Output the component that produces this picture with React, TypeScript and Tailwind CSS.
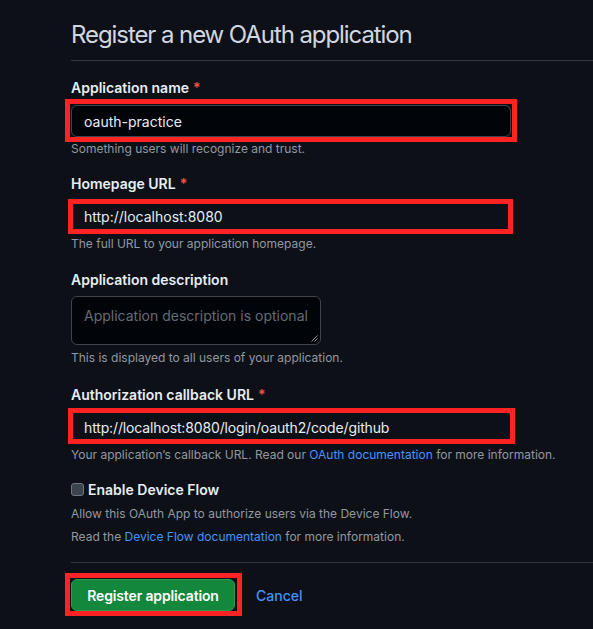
import React from 'react';

const RedMark: React.FC<{ className: string }> = ({ className }) => (
  <div className={`pointer-events-none absolute border-[5px] border-[#ff2323] ${className}`} />
);

const Label: React.FC<{ text: string; required?: boolean; className?: string }> = ({ text, required, className = '' }) => (
  <div className={`text-[14px] leading-[20px] font-semibold text-[#e6edf3] ${className}`}>
    {text}
    {required && <span className="ml-1 text-[#f85149]">*</span>}
  </div>
);

const Note: React.FC<{ children: React.ReactNode; className?: string }> = ({ children, className = '' }) => (
  <p className={`text-[12px] leading-[18px] text-[#9198a1] ${className}`}>{children}</p>
);

export default function App() {
  return (
    <div className="min-h-[629px] w-[593px] overflow-hidden bg-[#0d1117] pl-[71px] font-['Inter','Liberation_Sans',sans-serif]">
      <div className="border-b border-[#30363d] pt-[17px] pb-[7px]">
        <h1 className="text-[24px] leading-[36px] font-normal tracking-[-0.045em] text-[#d1d7e0]">Register a new OAuth application</h1>
      </div>

      <Label text="Application name" required className="mt-[17px]" />
      <div className="relative mt-[7px] w-[440px]">
        <div className="flex h-[32px] items-center rounded-md border border-[#3d444d] bg-[#010409] px-3 text-[14px] text-[#e6edf3]">
          oauth-practice
        </div>
        <RedMark className="-top-[6px] -bottom-[5px] -left-[6px] -right-[6px]" />
      </div>
      <Note className="mt-[3px]">Something users will recognize and trust.</Note>

      <Label text="Homepage URL" required className="mt-[16px]" />
      <div className="relative mt-[6px] w-[440px]">
        <div className="flex h-[32px] items-center rounded-md border border-[#3d444d] bg-[#0d1117] px-3 text-[14px] text-[#e6edf3]">
          http://localhost:8080
        </div>
        <RedMark className="-top-[1px] -bottom-[2px] -left-[3px] -right-[2px]" />
      </div>
      <Note className="mt-[3px]">The full URL to your application homepage.</Note>

      <Label text="Application description" className="mt-[17px]" />
      <div className="relative mt-[6px] h-[49px] w-[250px] rounded-md border border-[#3d444d] bg-[#010409] px-3 pt-[8px] text-[14px] text-[#656c76]">
        Application description is optional
        <svg className="absolute right-[2px] bottom-[2px]" width="7" height="7" viewBox="0 0 7 7">
          <path d="M6.5 0.5 L0.5 6.5 M6.5 3.5 L3.5 6.5" stroke="#8b949e" strokeWidth="1" />
        </svg>
      </div>
      <Note className="mt-[4px]">This is displayed to all users of your application.</Note>

      <Label text="Authorization callback URL" required className="mt-[18px]" />
      <div className="relative mt-[6px] w-[440px]">
        <div className="flex h-[32px] items-center rounded-md border border-[#3d444d] bg-[#0d1117] px-3 text-[14px] tracking-[-0.01em] text-[#e6edf3]">
          http://localhost:8080/login/oauth2/code/github
        </div>
        <RedMark className="-top-[3px] -bottom-[1px] -left-[3px] -right-[4px]" />
      </div>
      <Note className="mt-[3px]">
        Your application’s callback URL. Read our <span className="text-[#4493f8]">OAuth documentation</span> for more information.
      </Note>

      <div className="mt-[15px] flex h-[20px] items-center gap-[4px]">
        <span className="h-[13px] w-[13px] rounded-[3px] border border-[#6e7681] bg-[#3d434b]" />
        <span className="text-[14px] font-semibold text-[#e6edf3]">Enable Device Flow</span>
      </div>
      <Note className="mt-[6px]">Allow this OAuth App to authorize users via the Device Flow.</Note>
      <Note className="mt-[5px]">
        Read the <span className="text-[#4493f8]">Device Flow documentation</span> for more information.
      </Note>

      <div className="mt-[16px] border-t border-[#30363d]" />

      <div className="mt-[16px] flex items-center gap-[21px]">
        <div className="relative">
          <button className="flex h-[32px] w-[164px] items-center justify-center rounded-md border border-[#2e9a4f] bg-[#13873c] text-[14px] font-semibold tracking-[-0.01em] text-white">
            Register application
          </button>
          <RedMark className="-top-[6px] -bottom-[5px] -left-[6px] -right-[7px]" />
        </div>
        <span className="text-[14px] font-medium text-[#4493f8]">Cancel</span>
      </div>
    </div>
  );
}
